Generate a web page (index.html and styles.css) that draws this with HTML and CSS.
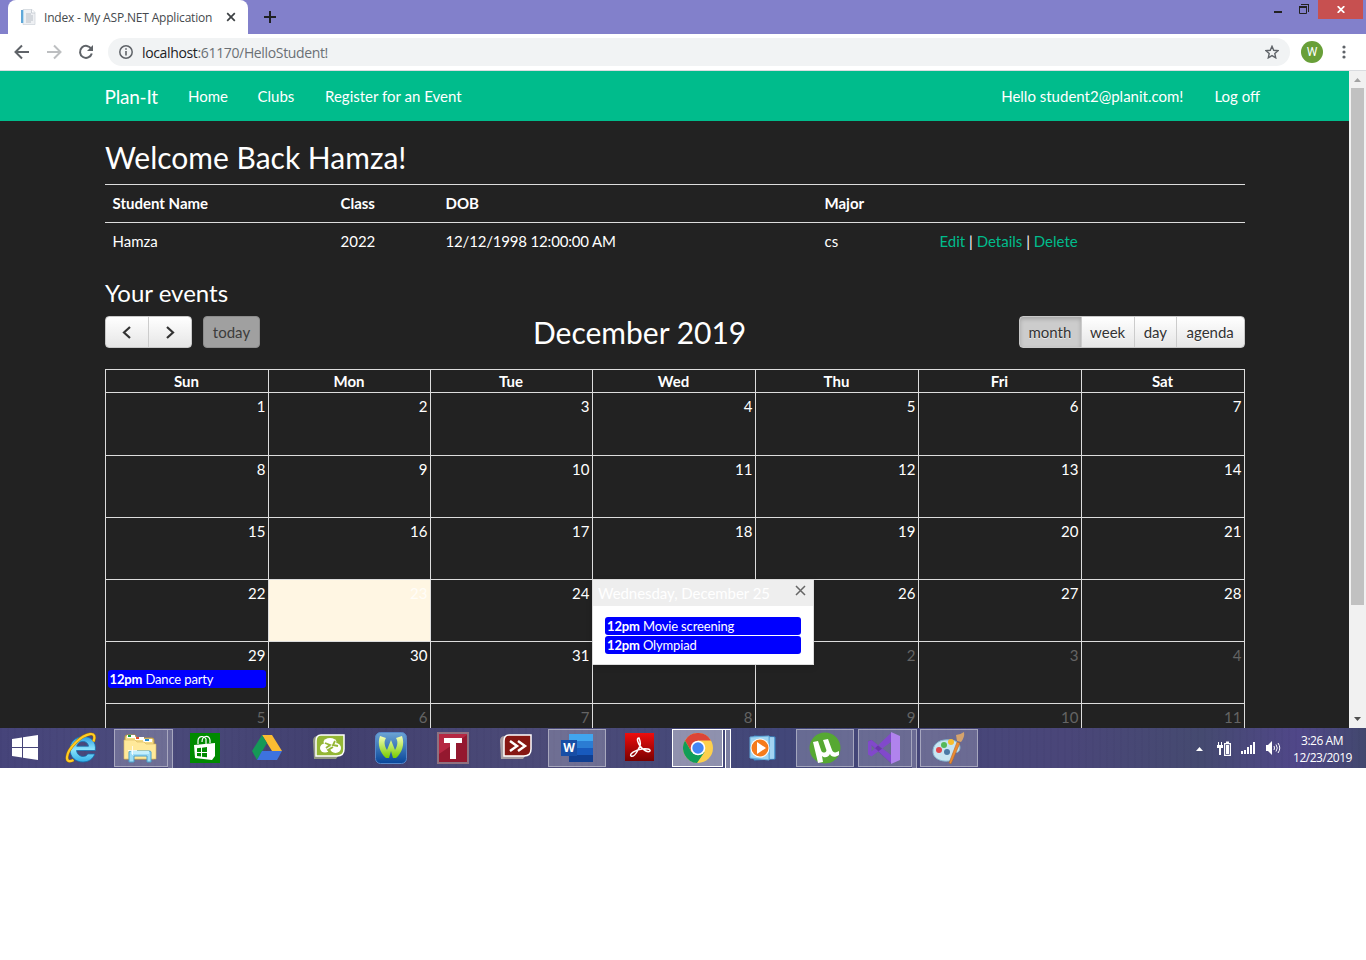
FILE: index.html
```html
<!DOCTYPE html>
<html lang="en">
<head>
<meta charset="utf-8">
<title>Index - My ASP.NET Application</title>
<link rel="stylesheet" href="styles.css">
</head>
<body>
<div class="screen">
  <header class="titlebar">
    <div class="tab">
      <svg class="favicon" width="16" height="16" viewBox="0 0 16 16"><path d="M3 .5h9l3 3v12H3z" fill="#eef0f3" stroke="#ccd1d8" stroke-width=".7"/><path d="M11.500.5v3.500H15" fill="#fff" stroke="#b9c0c9" stroke-width=".7"/><path d="M1 1h3v13H1z" fill="#60a7d8"/><path d="M3 1h1v13H3z" fill="#b9dcf0"/><path d="M6 5h5M6 7h7M6 9h7M6 11h7M6 13h5" stroke="#a9b1ba" stroke-width=".8"/></svg>
      <span class="tab-title">Index - My ASP.NET Application</span>
      <svg class="tab-close" width="10" height="10" viewBox="0 0 10 10"><path d="M1.200 1.200l7.600 7.600M8.800 1.200L1.200 8.800" stroke="#3c4043" stroke-width="1.700"/></svg>
    </div>
    <svg class="new-tab" width="12" height="12" viewBox="0 0 12 12"><path d="M6 0v12M0 6h12" stroke="#202124" stroke-width="2"/></svg>
    <div class="window-controls">
      <svg width="8" height="2" class="minimize"><path d="M0 0h8v2H0z" fill="#222"/></svg>
      <svg width="10" height="10" class="restore" viewBox="0 0 10 10"><path d="M.5 2.500h7v7h-7z" fill="none" stroke="#222"/><path d="M0 2h8v2H0zM2 0h8v8H9V1H2z" fill="#222"/></svg>
      <div class="window-close"><svg width="8" height="7" viewBox="0 0 8 7"><path d="M.7.200l6.600 6.600M7.300.200L.7 6.800" stroke="#fff" stroke-width="1.800"/></svg></div>
    </div>
  </header>
  <div class="toolbar">
    <svg class="tool-icon" width="16" height="16" viewBox="0 0 16 16"><path d="M15 8H2M8 1.500L1.500 8 8 14.500" fill="none" stroke="#5f6368" stroke-width="2"/></svg>
    <svg class="tool-icon" width="16" height="16" viewBox="0 0 16 16"><path d="M1 8h13M8 1.500L14.500 8 8 14.500" fill="none" stroke="#bdbfc1" stroke-width="2"/></svg>
    <svg class="tool-icon" width="16" height="16" viewBox="0 0 16 16"><path d="M13.300 5A6 6 0 1 0 13.800 9.500" fill="none" stroke="#5f6368" stroke-width="2"/><path d="M15 1v6H9z" fill="#5f6368"/></svg>
    <div class="omnibox">
      <svg width="14" height="14" viewBox="0 0 14 14"><circle cx="7" cy="7" r="6.200" fill="none" stroke="#5f6368" stroke-width="1.500"/><path d="M7 6v4.500M7 3.300v1.500" stroke="#5f6368" stroke-width="1.600"/></svg>
      <span class="url"><span class="host">localhost</span>:61170/HelloStudent!</span>
      <svg width="14" height="14" viewBox="0 0 14 14"><path d="M7 1.300l1.700 4 4.300.4-3.200 2.900.9 4.200L7 10.600l-3.700 2.200.9-4.200L1 5.700l4.300-.4z" fill="none" stroke="#5f6368" stroke-width="1.400"/></svg>
    </div>
    <div class="avatar">W</div>
    <svg class="kebab" width="4" height="14" viewBox="0 0 4 14"><circle cx="2" cy="2" r="1.600" fill="#5f6368"/><circle cx="2" cy="7" r="1.600" fill="#5f6368"/><circle cx="2" cy="12" r="1.600" fill="#5f6368"/></svg>
  </div>
  <div class="viewport">
    <div class="page">
      <nav class="navbar">
        <span class="brand">Plan-It</span>
        <span class="nav-home">Home</span>
        <span class="nav-clubs">Clubs</span>
        <span class="nav-register">Register for an Event</span>
        <span class="nav-user">Hello student2@planit.com!</span>
        <span class="nav-logoff">Log off</span>
      </nav>
      <main class="container">
        <h2 class="welcome">Welcome Back Hamza!</h2>
        <div class="student-row student-head"><span>Student Name</span><span>Class</span><span>DOB</span><span>Major</span><span></span></div>
        <div class="student-row"><span>Hamza</span><span>2022</span><span class="dob">12/12/1998 12:00:00 AM</span><span>cs</span><span class="actions"><a>Edit</a> | <a>Details</a> | <a>Delete</a></span></div>
        <h3 class="events-title">Your events</h3>
        <div class="cal-toolbar">
          <div class="btn-group nav-group">
            <span class="btn"><svg width="10" height="13" viewBox="0 0 10 13"><path d="M8 1L2 6.500 8 12" fill="none" stroke="#333" stroke-width="2.200"/></svg></span>
            <span class="btn"><svg width="10" height="13" viewBox="0 0 10 13"><path d="M2 1l6 5.500L2 12" fill="none" stroke="#333" stroke-width="2.200"/></svg></span>
          </div>
          <span class="btn-today">today</span>
          <h2 class="month-title">December 2019</h2>
          <div class="btn-group view-group"><span class="btn active">month</span><span class="btn">week</span><span class="btn">day</span><span class="btn">agenda</span></div>
        </div>
        <div class="calendar">
          <div class="week week-head"><span>Sun</span><span>Mon</span><span>Tue</span><span>Wed</span><span>Thu</span><span>Fri</span><span>Sat</span></div>
          <div class="week first"><span>1</span><span>2</span><span>3</span><span>4</span><span>5</span><span>6</span><span>7</span></div>
          <div class="week"><span>8</span><span>9</span><span>10</span><span>11</span><span>12</span><span>13</span><span>14</span></div>
          <div class="week"><span>15</span><span>16</span><span>17</span><span>18</span><span>19</span><span>20</span><span>21</span></div>
          <div class="week"><span>22</span><span class="today">23</span><span>24</span>
            <div class="popover-cell">
              <div class="popover">
                <div class="popover-head"><span>Wednesday, December 25</span><svg width="11" height="11" viewBox="0 0 11 11"><path d="M1 1l9 9M10 1l-9 9" stroke="#666" stroke-width="1.500"/></svg></div>
                <div class="popover-body">
                  <div class="event"><b>12pm</b> Movie screening</div>
                  <div class="event"><b>12pm</b> Olympiad</div>
                </div>
              </div>
            </div>
            <span>26</span><span>27</span><span>28</span></div>
          <div class="week"><div class="event-day">29<div class="event"><b>12pm</b> Dance party</div></div><span>30</span><span>31</span><span class="other">1</span><span class="other">2</span><span class="other">3</span><span class="other">4</span></div>
          <div class="week"><span class="other">5</span><span class="other">6</span><span class="other">7</span><span class="other">8</span><span class="other">9</span><span class="other">10</span><span class="other">11</span></div>
        </div>
      </main>
    </div>
    <div class="scrollbar">
      <svg width="7" height="4" viewBox="0 0 7 4"><path d="M0 4L3.500 0 7 4z" fill="#a3a3a3"/></svg>
      <div class="thumb"></div>
      <svg width="7" height="4" viewBox="0 0 7 4"><path d="M0 0h7L3.500 4z" fill="#505050"/></svg>
    </div>
  </div>
  <footer class="taskbar">
    <div class="task start"><svg width="26" height="26" viewBox="0 0 26 26"><path d="M0 4l10-1.500V12H0zM11 2.300L26 0v12H11zM0 13h10v9.500L0 21zM11 13h15v12l-15-2.300z" fill="#fff"/></svg></div>
    <div class="task ie"><svg width="32" height="32" viewBox="0 0 32 32"><defs><linearGradient id="ieg" x2="0" y2="1"><stop stop-color="#2a9ce0"/><stop offset=".5" stop-color="#8de4fc"/><stop offset="1" stop-color="#31afe8"/></linearGradient></defs><path d="M11.500 18.500h18.800C31.500 9 25.500 4.500 18.500 4.500 10.500 4.500 5 10 5 17.500S10.500 30 18 30c5.500 0 10-3 11.700-8h-7c-1 1.800-2.600 2.500-4.500 2.500-3.600 0-6.200-2.400-6.700-6zm.2-4.300c.8-2.800 3-4.700 6.100-4.700 3.200 0 5.300 1.800 5.700 4.700z" fill="url(#ieg)" stroke="#1471b0" stroke-width=".8"/><path d="M28.500 9.500c2-5 .8-8-3.500-7.400C16 3.500 3 16 2 25c-.4 4.200 2.300 5.300 6.500 3" fill="none" stroke="#a97500" stroke-width="3"/><path d="M28.500 9.500c2-5 .8-8-3.500-7.400C16 3.500 3 16 2 25c-.4 4.200 2.300 5.300 6.500 3" fill="none" stroke="#ffcc24" stroke-width="2.200"/></svg></div>
    <div class="task open stacked"><svg width="34" height="32" viewBox="0 0 34 32"><path d="M2 5q0-2 2-2h8l2 3h15q2 0 2 2v19H2z" fill="#f4da83" stroke="#b79545"/><path d="M4 3h8v3H4zM12 5h9v3h-9zM20 7h9v3h-9z" fill="#fff"/><path d="M5 3h3v2H5z" fill="#1da23b"/><path d="M13 5h3v2h-3z" fill="#e74e2b"/><path d="M22 7h4v2h-4z" fill="#288bd0"/><path d="M1 8h11l2 2h7l2 2h10v15H1z" fill="#ffe99a" stroke="#d7b65c" stroke-width=".6"/><path d="M6 30V20q0-1 2-1h18q2 0 2 1v10h-4v-6H11v6z" fill="#9ddcf5" stroke="#4b9fc8"/><path d="M8 19h18v3H8z" fill="#c4effc"/><path d="M9.500 14v9M5 18.500h9" stroke="#fff" stroke-width=".8"/></svg></div>
    <div class="task store"><svg width="30" height="30" viewBox="0 0 30 30"><path d="M0 0h30v30H0z" fill="#008a00"/><path d="M8 11V8c0-5 6-6 8-2v5M12 9c0-7 7-7 8-2v3" fill="none" stroke="#fff" stroke-width="1.200"/><path d="M4 12l21-2v13l-3 4-17-2z" fill="#fff"/><path d="M7 15.300l4-.5V19H7zM12 14.700l5-.6V19h-5zM7 20h4v3.500L7 23zM12 20h5v4.300l-5-.6z" fill="#008a00"/></svg></div>
    <div class="task drive"><svg width="30" height="28" viewBox="0 0 30 28"><path d="M10 1h10l10 16H20z" fill="#fbbc32"/><path d="M10 1l5 8L5 26 0 17z" fill="#159957"/><path d="M10 17h20l-5 9H5z" fill="#3d72df"/></svg></div>
    <div class="task recycle"><svg width="33" height="26" viewBox="0 0 33 26"><path d="M0 7q0-5 5-5h24v15l-6 8H1z" fill="#929983"/><path d="M3 7q0-6 5-6h23v14q0 7-7 7H3z" fill="#94b735" stroke="#fff" stroke-width="1.500"/><ellipse cx="17" cy="8" rx="6.500" ry="4" fill="#fff"/><ellipse cx="12" cy="14" rx="5" ry="4.500" fill="#fff"/><ellipse cx="22.500" cy="14" rx="5.500" ry="5" fill="#fff"/><path d="M12 9l5 2-4 3M22 7l-2 4 5 1M18 19l-3-3 5-3" fill="none" stroke="#94b735" stroke-width="1.800"/></svg></div>
    <div class="task wnet"><svg width="32" height="32" viewBox="0 0 32 32"><defs><linearGradient id="wg" x2="0" y2="1"><stop stop-color="#6ca4d4"/><stop offset="1" stop-color="#08469a"/></linearGradient><linearGradient id="wl" x2="0" y2="1"><stop stop-color="#f5ffb6"/><stop offset="1" stop-color="#79cc00"/></linearGradient></defs><rect x=".5" y=".5" width="31" height="31" rx="5" fill="url(#wg)" stroke="#5686c8"/><path d="M5 4l6 2c-2 3-2 7 1 12l4-10 4 10c3-5 3-9 1-12l6-2c3 8 0 17-6 22h-3l-2-7-2 7h-3C5 21 2 12 5 4z" fill="url(#wl)"/></svg></div>
    <div class="task tee"><svg width="32" height="32" viewBox="0 0 32 32"><path d="M1 1h30v30H1z" fill="#b52742" stroke="#8e7180" stroke-width="2"/><path d="M2 22L30 3v27H2z" fill="#94182f"/><path d="M7 6h18v5h-6v16h-6V11H7z" fill="#fff"/></svg></div>
    <div class="task arrows"><svg width="33" height="26" viewBox="0 0 33 26"><path d="M0 7q0-5 5-5h24v15l-6 8H1z" fill="#a69da2"/><path d="M4 7q0-6 5-6h22v14q0 7-7 7H4z" fill="#851713" stroke="#fff" stroke-width="1.500"/><path d="M10 7l7 5-7 5M18 7l7 5-7 5" fill="none" stroke="#fff" stroke-width="2.500"/></svg></div>
    <div class="task open"><svg width="32" height="28" viewBox="0 0 32 28"><path d="M8 0h24v7H8z" fill="#41a5ee"/><path d="M8 7h24v7H8z" fill="#2b7cd3"/><path d="M8 14h24v7H8z" fill="#185abd"/><path d="M8 21h24v7H8z" fill="#103f91"/><path d="M0 6h16v16H0z" fill="#174ea6"/><text x="8" y="18.300" class="word-letter">W</text></svg></div>
    <div class="task adobe"><svg width="29" height="28" viewBox="0 0 29 28"><defs><linearGradient id="ag" x2="0" y2="1"><stop stop-color="#ef0d0d"/><stop offset="1" stop-color="#790000"/></linearGradient></defs><path d="M0 0h29v28H0z" fill="url(#ag)"/><path d="M14 5c2 5 2 7-1 12-2 4-5 7-7 6-2-2 4-6 11-7 4-.5 9 0 8 2-2 2-7-1-10-5-2-3-4-8-1-8z" fill="none" stroke="#fff" stroke-width="1.500"/></svg></div>
    <div class="task open current"><svg width="30" height="30" viewBox="0 0 30 30"><circle cx="15" cy="15" r="15" fill="#fdd04d"/><path d="M2 7.500A15 15 0 0 1 28 7.500H15L8.500 19z" fill="#dc4437"/><path d="M2 7.500A15 15 0 0 0 14 30l7.500-11H8.500z" fill="#109d58"/><circle cx="15" cy="15" r="7.300" fill="#fff"/><circle cx="15" cy="15" r="5.700" fill="#4385f5"/></svg></div>
    <div class="task wmp"><svg width="27" height="26" viewBox="0 0 27 26"><path d="M5 1l21 1v22L5 25z" fill="#73b7e6" stroke="#3a86c2"/><path d="M22 2v22M24 2v22" stroke="#d3effd"/><path d="M1 2l19-1v24L1 23z" fill="#a0d6f2" stroke="#62aadb"/><circle cx="11" cy="13" r="9.500" fill="#fff"/><circle cx="11" cy="13" r="8.500" fill="#f57b1b"/><path d="M8 7l9 6-9 6z" fill="#fff"/></svg></div>
    <div class="task open"><svg width="32" height="32" viewBox="0 0 32 32"><circle cx="16" cy="16" r="15.500" fill="#56a832"/><path d="M4 10l5-1 3 9c1 4 7 3 5-1l-3-9 5-1 4 11c1 3 4 3 7 1v4c-4 3-8 2-9-1-2 4-6 4-8 2l1 6-5 1z" fill="#fff"/></svg></div>
    <div class="task open stacked"><svg width="34" height="32" viewBox="0 0 34 32"><path d="M1 9.500L4.500 8 25 25v7L1 10z" fill="#6c33ae"/><path fill-rule="evenodd" d="M1 9.500L4.500 8 24 23v8L4.500 13v6.500L24 1v9L4.500 24.500 1 22.500z" fill="#8149cb"/><path d="M24 0l9 4v24l-9 4z" fill="#b083ed"/></svg></div>
    <div class="task open"><svg width="34" height="32" viewBox="0 0 34 32"><path d="M1 18C2 10 10 7 18 8c8 0 12 6 9 11-2 3-5 0-6 3s2 6-4 7C8 30 0 26 1 18z" fill="#c8e5f2" stroke="#86b7d1"/><circle cx="7" cy="18" r="3" fill="#e2464b"/><circle cx="12" cy="13" r="3" fill="#56b858"/><circle cx="19" cy="10" r="3" fill="#f6bd2e"/><circle cx="15" cy="20" r="3" fill="#4b79a5"/><path d="M25 10l3 1-9 21-2-1z" fill="#ed8b31" stroke="#a4632b" stroke-width=".5"/><path d="M24 3q4 0 8-3 1 5-3 10l-4-1z" fill="#d5a36d"/></svg></div>
    <div class="tray">
      <svg class="chevron" width="7" height="4" viewBox="0 0 7 4"><path d="M0 4L3.500 0 7 4z" fill="#fff"/></svg>
      <svg class="power" width="15" height="15" viewBox="0 0 15 15"><path d="M1 1h1v3h2V1h1v3h1v3H4v7H2V7H0V4h1z" fill="#fff"/><path d="M7.600 2.600h5.800v11.800H7.600z" fill="none" stroke="#fff" stroke-width="1.200"/><path d="M9 4h3v9H9zM9 .5h3v2H9z" fill="#fff"/></svg>
      <svg class="signal" width="15" height="12" viewBox="0 0 15 12"><path d="M0 9h2v3H0zM3 8h2v4H3zM6 5h2v7H6zM9 3h2v9H9zM12 0h2v12h-2z" fill="#fff"/></svg>
      <svg class="volume" width="16" height="14" viewBox="0 0 16 14"><path d="M1 4h2l4-4v14l-4-4H1z" fill="#fff"/><path d="M9 5q1 2 0 4M11 3.500q2.500 3.500 0 7M13 2q3.500 5 0 10" fill="none" stroke="#fff"/></svg>
      <div class="clock"><span>3:26 AM</span><span>12/23/2019</span></div>
    </div>
  </footer>
</div>
</body>
</html>
```
FILE: styles.css
```css
* { box-sizing: border-box; }
body { margin: 0; background: #fff; font: 15px/21px Lato, sans-serif; color: #fff; white-space: nowrap; }
h2, h3 { margin: 0; font-weight: 400; }
svg { display: block; flex: none; }
.screen { width: 1366px; height: 768px; display: flex; flex-direction: column; overflow: hidden; }

/* browser window */
.titlebar { height: 34px; background: #8280cb; display: flex; align-items: flex-start; font-family: "Open Sans", sans-serif; }
.tab { width: 240px; height: 34px; margin-left: 8px; padding: 0 12px; background: #fff; border-radius: 8px 8px 0 0; display: flex; align-items: center; color: #45494d; font-size: 12px; }
.tab-title { margin-left: 8px; width: 184px; letter-spacing: -.18px; }
.new-tab { margin: 11px 0 0 16px; }
.window-controls { margin-left: auto; margin-right: 3px; display: flex; align-items: flex-start; }
.minimize { margin: 11px 17px 0 0; }
.restore { margin: 4px 9px 0 0; }
.window-close { width: 45px; height: 19px; background: #c75050; display: flex; align-items: center; justify-content: center; }
.toolbar { height: 37px; background: #fff; border-bottom: 1px solid #dadce0; display: flex; align-items: center; padding: 0 20px 0 14px; font-family: "Open Sans", sans-serif; }
.tool-icon { margin-right: 16px; }
.omnibox { width: 1182px; height: 28px; margin-left: -2px; padding: 0 11px; background: #f1f3f4; border-radius: 14px; display: flex; align-items: center; }
.url { flex: 1; margin-left: 9px; color: #6b7075; font-size: 14px; letter-spacing: -.35px; }
.host { color: #202124; }
.avatar { width: 22px; height: 22px; margin-left: 11px; border-radius: 50%; background: #689f38; font: 12px/22px Roboto, sans-serif; text-align: center; }
.kebab { margin-left: auto; }
.viewport { height: 657px; display: flex; }
.page { width: 1349px; background: #222; overflow: hidden; }
.scrollbar { width: 17px; background: #f1f1f1; display: flex; flex-direction: column; align-items: center; padding: 7px 0; }
.thumb { width: 13px; height: 517px; margin: 6px 0 auto; background: #c1c1c1; }

/* site navigation */
.navbar { height: 50px; background: #00bc8c; display: flex; align-items: center; padding: 1px 89px 0 104.500px; }
.brand { font-size: 19px; letter-spacing: -.2px; width: 83.500px; }
.nav-home { width: 69.500px; }
.nav-clubs { width: 67.500px; }
.nav-user { margin-left: auto; }
.nav-logoff { margin-left: 31px; }

/* student details */
.container { width: 1140px; margin-left: 105px; padding-top: 19px; }
.welcome { font-size: 30px; line-height: 35px; height: 44px; }
.student-row { display: grid; grid-template-columns: 228px 105px 379px 115px 1fr; height: 38px; border-top: 1px solid #ddd; padding: 8px 0 0 7.500px; }
.student-head { font-weight: 700; }
.dob { letter-spacing: -.18px; }
.actions a { color: #00bc8c; }
.events-title { font-size: 24px; line-height: 26px; margin-top: 20px; }

/* calendar controls */
.cal-toolbar { display: flex; align-items: flex-start; height: 53px; margin-top: 10px; color: #333; }
.btn-group { display: flex; height: 32px; border: 1px solid #c8c8c8; border-radius: 4px; background: linear-gradient(#fff, #e6e6e6); overflow: hidden; }
.btn { display: flex; align-items: center; justify-content: center; border-left: 1px solid #ccc; text-shadow: 0 1px 1px rgba(255,255,255,.75); padding-right: 1px; }
.btn:first-child { border-left: 0; }
.nav-group { width: 87px; }
.nav-group .btn { width: 43px; }
.nav-group .btn:first-child { width: 42px; }
.btn-today { width: 57px; height: 32px; margin-left: 11px; border-radius: 4px; border: 1px solid #8c8c8c; background: #a0a0a0; text-align: center; line-height: 31px; color: #3c3c3c; }
.month-title { color: #fff; font-size: 30px; line-height: 33px; width: 214px; margin-left: 273px; }
.view-group { margin-left: auto; width: 226px; }
.view-group .btn { width: 54px; }
.view-group .btn:nth-child(3) { width: 42px; }
.view-group .btn:nth-child(4) { width: 68px; }
.view-group .btn.active { width: 61px; background: #ccc; box-shadow: inset 0 2px 4px rgba(0,0,0,.2); }

/* month grid */
.calendar { width: 1140px; border-right: 1px solid #ddd; }
.week { height: 62px; display: grid; grid-template-columns: 163px 162px 162px 163px 163px 163px 163px; border-top: 1px solid #ddd; text-align: right; }
.week > * { border-left: 1px solid #ddd; padding: 3px 2.500px 0 0; }
.week.first { height: 63px; }
.week-head { height: 23px; text-align: center; font-weight: 700; }
.week-head > * { padding: 1px 1px 0 0; }
.week .today { background: #fff6e3; color: #fffdf8; }
.week .other { color: #646464; }
.event { height: 18px; padding: 0 2px; border-radius: 3px; background: #00f; font-size: 13px; line-height: 18px; letter-spacing: -.15px; text-align: left; }
.event-day .event { margin: 4px -.5px 0 1.500px; }
.popover-cell { position: relative; }
.popover { position: absolute; left: -1px; top: -1px; width: 222px; height: 86px; background: #fff; border: 1px solid #ddd; z-index: 2; text-align: left; box-shadow: 0 2px 6px rgba(0,0,0,.15); }
.popover-head { height: 26px; padding: 3px 7px 0 5px; background: #eee; color: #fff; letter-spacing: -.05px; display: flex; justify-content: space-between; }
.popover-head svg { margin-top: 2px; }
.popover-body { padding: 11px 12px 0; display: grid; gap: 1px; }

/* desktop taskbar */
.taskbar { height: 40px; display: flex; align-items: center; gap: 4px; background: repeating-linear-gradient(90deg, rgba(30,25,70,.04) 0 2px, transparent 2px 7px), linear-gradient(90deg, #46447a, #4b4b7c 10%, #42406f 25%, #4c4b78 40%, #424779 57%, #4a4679 78%, #454a70 88%, #504789 95%, #42486e); }
.task { width: 58px; height: 38px; display: flex; align-items: center; justify-content: center; flex: none; }
.start { width: 48px; padding-left: 2px; }
.ie { padding-right: 1px; }
.open { position: relative; background: rgba(255,255,255,.2); border: 1px solid rgba(255,255,255,.4); }
.stacked, .current { width: 54px; margin-right: 4px; }
.stacked { padding-right: 2px; }
.stacked::after { content: ""; position: absolute; left: 53px; top: -1px; width: 4px; height: 38px; border: 1px solid rgba(255,255,255,.4); border-left: 0; background: rgba(255,255,255,.2); }
.current { width: 51px; margin-right: 7px; background: rgba(255,255,255,.4); border-color: #fff; }
.current::after { content: ""; position: absolute; left: 49px; top: -1px; width: 8px; height: 38px; border: 1px solid #fff; border-left: 0; background: linear-gradient(90deg, transparent 3px, #fff 3px 4px, rgba(255,255,255,.3) 4px); }
.word-letter { font: 700 12px "Open Sans", sans-serif; fill: #fff; text-anchor: middle; }
.adobe, .arrows, .recycle { padding-bottom: 3px; }
.arrows { padding-left: 2px; }
.wmp { padding-right: 2px; }
.tray { margin-left: auto; margin-right: 15px; display: flex; align-items: center; font-family: "Open Sans", sans-serif; }
.chevron { margin-right: 14px; margin-top: 2px; }
.power { margin-right: 9px; }
.signal { margin-right: 9px; }
.volume { margin-right: 12px; }
.clock { width: 58px; font-size: 12px; line-height: 17px; letter-spacing: -.47px; display: flex; flex-direction: column; text-align: center; padding-top: 2px; }
```
